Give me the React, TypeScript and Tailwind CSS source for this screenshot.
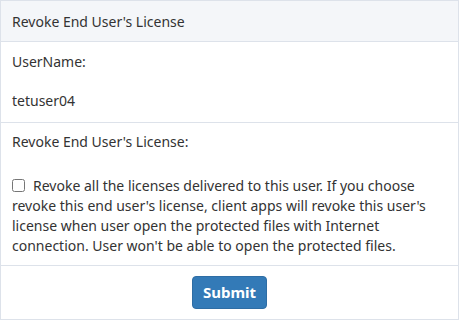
export default function App() {
  return (
    <div className="w-[460px] h-[321px] bg-white" style={{ fontFamily: '"Noto Sans", "Open Sans", sans-serif' }}>
      <div className="w-[459px] h-[320px] border border-[#dde2ea] flex flex-col text-[14px] text-[#333]">
        <div className="h-[41px] shrink-0 bg-[#f4f6f9] border-b border-[#dde2ea] px-[11px] flex items-center">
          Revoke End User's License
        </div>

        <div className="h-[81px] shrink-0 border-b border-[#dde2ea] px-[11px] pt-[10px] leading-[20px]">
          <p>UserName:</p>
          <p className="mt-[19px]">tetuser04</p>
        </div>

        <div className="h-[143px] shrink-0 border-b border-[#dde2ea] px-[11px] pt-[9px] leading-[20px]">
          <p>Revoke End User's License:</p>
          <label className="block mt-[24px]">
            <input type="checkbox" className="w-[13px] h-[13px] align-[-1px] mr-[8px]" />
            Revoke all the licenses delivered to this user. If you choose revoke this end user's license, client apps will
            revoke this user's license when user open the protected files with Internet connection. User won't be able to
            open the protected files.
          </label>
        </div>

        <div className="flex-1 flex justify-center pt-[10px]">
          <button className="h-[33px] w-[75px] rounded-[4px] bg-[#337ab7] border border-[#2e6da4] text-white font-bold text-[15px]">
            Submit
          </button>
        </div>
      </div>
    </div>
  );
}
